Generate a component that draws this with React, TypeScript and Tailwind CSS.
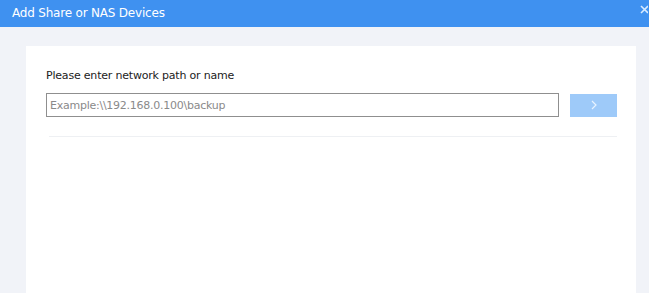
export default function App() {
  return (
    <div className="w-[649px] h-[293px] overflow-hidden flex flex-col bg-[#f1f3f8] font-['DejaVu_Sans',sans-serif]">
      {/* Title bar */}
      <div className="h-[27px] shrink-0 bg-[#3f91f0] flex items-start justify-between pl-[12px] pr-[1px]">
        <span className="mt-[5px] text-white text-[12px] leading-[16px] tracking-[-0.2px]">Add Share or NAS Devices</span>
        <svg width="8" height="9" viewBox="0 0 8 9" className="mt-[5px]">
          <path d="M1 1 L8 8 M8 1 L1 8" stroke="#d8ebff" strokeWidth="1.6" />
        </svg>
      </div>

      <div className="flex-1 pt-[19px] pl-[26px] pr-[13px]">
        <div className="h-full bg-white pt-[23px] pl-[20px] pr-[19px]">
          <p className="text-[11px] tracking-[-0.2px] text-[#222] leading-[14px]">Please enter network path or name</p>
          <div className="mt-[10px] flex items-center gap-[11px]">
            <input
              placeholder="Example:\\192.168.0.100\backup"
              className="w-[514px] h-[24px] border border-[#8f8f8f] px-[3px] text-[11px] tracking-[-0.25px] text-[#333] placeholder-[#8a8a8a] outline-none"
            />
            <button className="w-[47px] h-[23px] bg-[#9ecaf9] flex items-center justify-center">
              <svg width="6" height="10" viewBox="0 0 6 10">
                <path d="M1 1 L5 5 L1 9" stroke="#e8f3ff" strokeWidth="1.2" fill="none" />
              </svg>
            </button>
          </div>
          <div className="mt-[19px] ml-[3px] h-px bg-[#eef0f3]" />
        </div>
      </div>
    </div>
  )
}
